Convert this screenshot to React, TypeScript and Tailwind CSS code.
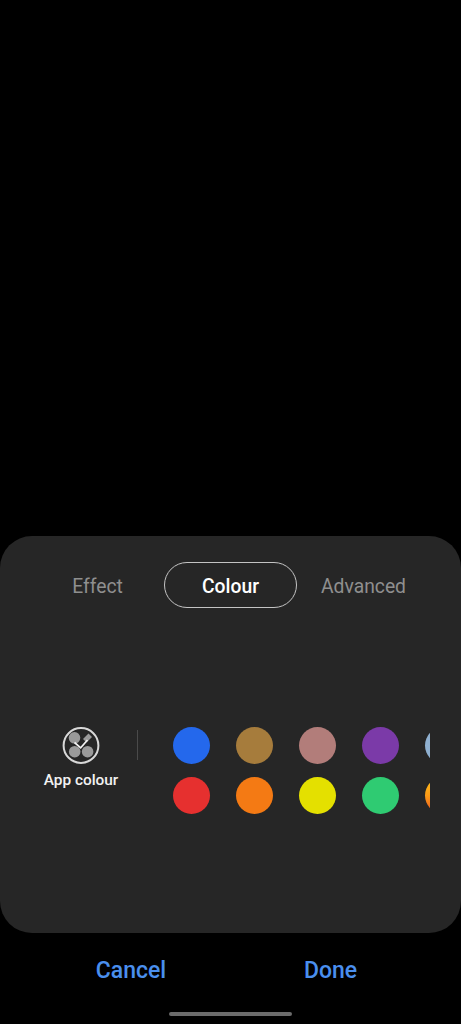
const tabs = ["Effect", "Colour", "Advanced"];

const swatches = [
    "bg-[#2468ec]",
    "bg-[#a67c3c]",
    "bg-[#b27d7a]",
    "bg-[#7b3aa8]",
    "bg-[#8fb0d0]",
    "bg-[#e6302f]",
    "bg-[#f47a14]",
    "bg-[#e4e000]",
    "bg-[#2fcb72]",
    "bg-gradient-to-b from-[#ffc21a] via-[#fb9a16] to-[#e8501e]",
];

function AppColourIcon() {
    return (
        <svg width="38" height="38" viewBox="0 0 38 38" fill="none">
            <circle cx="19" cy="18.5" r="17.4" stroke="#d8d8d8" strokeWidth="2" />
            <circle cx="12.5" cy="10.8" r="5.8" fill="#9a9a9a" />
            <circle cx="12.7" cy="24.7" r="5.8" fill="#9a9a9a" />
            <circle cx="25.6" cy="24.7" r="5.8" fill="#9a9a9a" />
            <path d="M21 12 L26.5 6.5 L30 10 L24.5 15.5 Z" fill="#9a9a9a" />
            <path d="M12.5 15.5 L18.7 20.8 L25.5 13" stroke="#f4f4f4" strokeWidth="1.7" />
        </svg>
    );
}

export default function App() {
    return (
        <div className="flex h-[1024px] w-[461px] flex-col overflow-hidden bg-black font-['Roboto',sans-serif]">
            <div className="h-[536px] shrink-0" />

            <div className="h-[397px] shrink-0 rounded-[32px] bg-[#262626]">
                {/* Tabs */}
                <div className="mx-[31px] mt-[26px] grid h-[46px] grid-cols-3">
                    {tabs.map((tab) => (
                        <div
                            key={tab}
                            className={
                                tab === "Colour"
                                    ? "flex items-center justify-center rounded-full border border-[#c4c4c4] pt-[5px] text-[19.3px] font-medium text-white"
                                    : "flex items-center justify-center pt-[5px] text-[19.3px] text-[#8f8f8f]"
                            }
                        >
                            {tab}
                        </div>
                    ))}
                </div>

                {/* App colour row */}
                <div className="mt-[119px] flex items-start pl-[25px]">
                    <div className="flex w-[112px] flex-col items-center">
                        <AppColourIcon />
                        <span className="mt-[5px] text-[15.4px] leading-[20px] font-medium text-[#f2f2f2]">
                            App colour
                        </span>
                    </div>

                    <div className="mt-[3px] h-[30px] w-px bg-[#4a4a4a]" />

                    <div className="ml-[35px] w-[257px] overflow-hidden">
                        <div className="grid w-[289px] grid-cols-[repeat(5,37px)] gap-x-[26px] gap-y-[13px]">
                            {swatches.map((color) => (
                                <div key={color} className={`h-[37px] w-[37px] rounded-full ${color}`} />
                            ))}
                        </div>
                    </div>
                </div>
            </div>

            {/* Footer */}
            <div className="grid h-[73px] shrink-0 grid-cols-[262px_137px] pt-[3px] text-[23px] font-medium text-[#4a8fee]">
                <span className="flex items-center justify-center">Cancel</span>
                <span className="flex items-center justify-center">Done</span>
            </div>

            <div className="mx-auto mt-[6px] h-[4px] w-[123px] rounded-full bg-[#6b6b6b]" />
        </div>
    );
}
